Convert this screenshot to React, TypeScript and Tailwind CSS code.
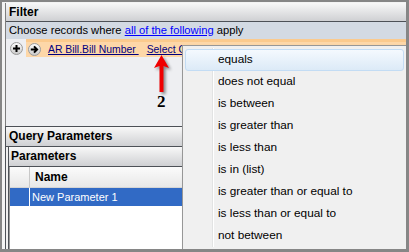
const ops = [
  "equals",
  "does not equal",
  "is between",
  "is greater than",
  "is less than",
  "is in (list)",
  "is greater than or equal to",
  "is less than or equal to",
  "not between",
];

function RoundBtn({ kind }: { kind: "plus" | "arrow" }) {
  return (
    <svg width="13" height="13" viewBox="0 0 13 13">
      <defs>
        <linearGradient id={`g-${kind}`} x1="0" y1="0" x2="0" y2="1">
          <stop offset="0" stopColor="#fdfdfd" />
          <stop offset="1" stopColor="#c9c9c9" />
        </linearGradient>
      </defs>
      <circle cx="6.5" cy="6.5" r="6" fill={`url(#g-${kind})`} stroke="#9a9a9a" />
      {kind === "plus" ? (
        <path d="M6.5 3v7M3 6.5h7" stroke="#000" strokeWidth="2" />
      ) : (
        <path d="M2.8 6.5h6M6 3.4l3.1 3.1L6 9.6" stroke="#000" strokeWidth="2" fill="none" />
      )}
    </svg>
  );
}

export default function App() {
  return (
    <div className="relative w-[409px] h-[252px] overflow-hidden flex flex-col border-t-2 border-r-[3px] border-b-[3px] border-l-2 border-[#868686] bg-[#f3f3f3] pl-[3px] pt-px font-['Liberation_Sans',Arial,sans-serif] text-black">
      {/* Filter */}
      <div className="h-[123px] flex flex-col border-l border-[#7d7d7d] bg-[#eeeff2]">
        <div className="h-[19px] shrink-0 border-b border-[#4d5157] bg-linear-to-b from-[#f8f8f8] to-[#cfd0d3] pl-[3px] text-[12px] font-bold leading-[18px]">
          Filter
        </div>
        <div className="h-[17px] shrink-0 bg-[#d3dae3] pl-[3px] text-[11.2px] leading-[17px] whitespace-nowrap">
          Choose records where <span className="text-[#0000ff] underline">all of the following</span> apply
        </div>
        <div className="h-[18px] shrink-0 flex">
          <div className="w-[20px] shrink-0 pl-[4px] pt-[3px]">
            <RoundBtn kind="plus" />
          </div>
          <div className="flex-1 flex items-center border-t-[3px] border-[#fbca8d] bg-[#fdd7a8] pl-[2px] whitespace-nowrap text-[10.4px] text-[#00007f]">
            <RoundBtn kind="arrow" />
            <span className="ml-[7px] underline">AR Bill.Bill Number&nbsp;</span>
            <span className="ml-[8px] underline">Select Operator</span>
          </div>
        </div>
        <div className="flex-1" />
      </div>

      {/* Query Parameters */}
      <div className="flex-1 flex flex-col border-t border-l border-[#4d5157]">
        <div className="h-[20px] shrink-0 border-b border-[#4d5157] bg-linear-to-b from-[#f8f8f8] to-[#cfd0d3] pl-[3px] text-[12px] font-bold leading-[19px]">
          Query Parameters
        </div>
        <div className="flex-1 flex flex-col pl-[2px] bg-[#f0f0f0]">
          <div className="flex-1 flex flex-col border-l border-[#4d5157]">
            <div className="h-[20px] shrink-0 border-b border-[#4d5157] bg-linear-to-b from-[#f8f8f8] to-[#cfd0d3] pl-[2px] text-[12px] font-bold leading-[19px]">
              Parameters
            </div>
            <div className="flex-1 flex flex-col bg-white border-l border-[#9a9a9a]">
              <div className="h-[21px] shrink-0 flex border-b border-[#d5d5d5] bg-linear-to-b from-[#fbfbfb] to-[#e8e8e8] text-[12px] font-bold leading-[20px]">
                <div className="w-[20px] border-r border-[#c8c8c8]" />
                <div className="pl-[5px]">Name</div>
              </div>
              <div className="h-[18px] shrink-0 flex bg-[#316ac5] text-white text-[11px] leading-[18px]">
                <div className="w-[20px] border-r border-white" />
                <div className="pl-[2px]">New Parameter 1</div>
              </div>
            </div>
          </div>
        </div>
      </div>

      {/* red marker */}
      <svg
        className="absolute left-[146px] top-[50px] drop-shadow-[2px_2px_1.5px_rgba(0,0,0,0.45)]"
        width="26"
        height="42"
        viewBox="0 0 26 42"
      >
        <polygon points="13.5,3 21,16 15.5,14 15.5,40 11.5,40 11.5,14 6,16" fill="#f00000" />
      </svg>
      <div className="absolute left-[155px] top-[91px] font-['Liberation_Serif',serif] text-[17px] font-bold leading-[17px]">
        2
      </div>

      {/* operator dropdown */}
      <div className="absolute left-[180px] top-[43px] w-[225px] h-[205px] border border-[#979797] bg-[#f0f0f0] pt-[3px] px-[2px] shadow-[2px_2px_3px_rgba(0,0,0,0.15)]">
        <div className="absolute left-[29px] top-[2px] bottom-[2px] w-px bg-[#e2e3e3]" />
        <div className="absolute left-[30px] top-[2px] bottom-[2px] w-px bg-white" />
        {ops.map((o, i) => (
          <div
            key={o}
            className={
              i === 0
                ? "relative h-[22px] rounded-[3px] border border-[#c3dcf4] bg-linear-to-b from-[#f4f9fe] to-[#dceaf7] pl-[32px] text-[11.8px] leading-[18px] whitespace-nowrap"
                : "relative h-[22px] pl-[33px] text-[11.8px] leading-[20px] whitespace-nowrap"
            }
          >
            {o}
          </div>
        ))}
      </div>
    </div>
  );
}
